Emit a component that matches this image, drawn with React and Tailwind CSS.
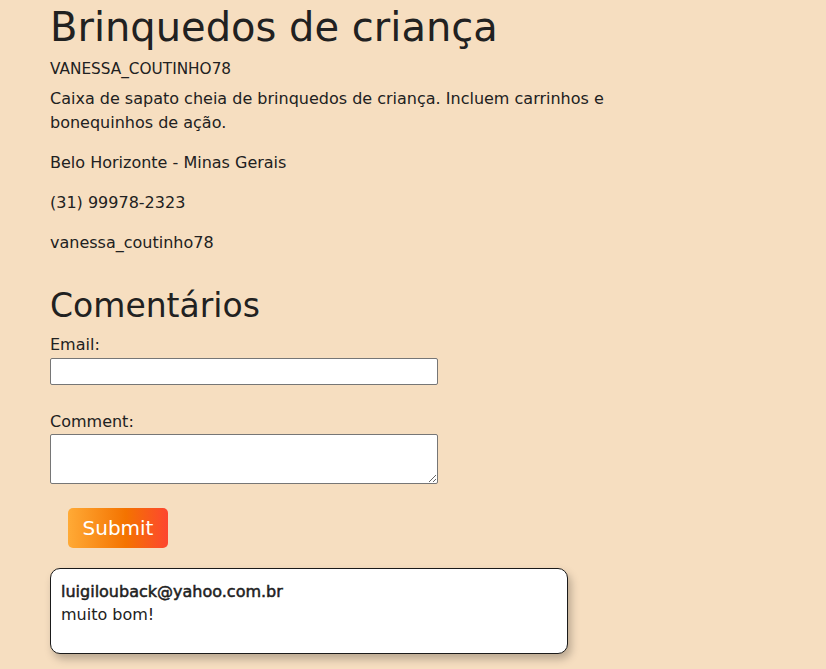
export default function App() {
  return (
    <div className="min-h-[669px] w-full bg-[#f6dec0] text-[#212121] font-['DejaVu_Sans',sans-serif] pl-[50px] pb-[20px] overflow-hidden">
      <h1 className="pt-[3px] text-[40px] leading-[48px] font-normal whitespace-nowrap">Brinquedos de criança</h1>
      <p className="mt-[6px] text-[15.3px] leading-[24px]">VANESSA_COUTINHO78</p>
      <p className="mt-[6px] text-[16px] leading-[24px] w-[600px]">
        Caixa de sapato cheia de brinquedos de criança. Incluem carrinhos e<br />bonequinhos de ação.
      </p>
      <p className="mt-[16px] text-[16px] leading-[24px]">Belo Horizonte - Minas Gerais</p>
      <p className="mt-[16px] text-[16px] leading-[24px]">(31) 99978-2323</p>
      <p className="mt-[16px] text-[16px] leading-[24px]">vanessa_coutinho78</p>
      <h2 className="mt-[31px] text-[33px] leading-[40px] font-normal">Comentários</h2>
      <form className="flex flex-col items-start" onSubmit={(e) => e.preventDefault()}>
        <label className="mt-[7px] text-[16px] leading-[24px]">Email:</label>
        <input type="email" className="mt-[1px] h-[27px] w-[388px] bg-white border border-[#767676] rounded-[2px]" />
        <label className="mt-[25px] text-[16px] leading-[24px]">Comment:</label>
        <textarea className="mt-0 h-[50px] w-[388px] bg-white border border-[#767676] rounded-[2px] block" />
        <button type="submit" className="mt-[24px] ml-[18px] h-[40px] w-[100px] rounded-[5px] bg-[linear-gradient(90deg,#ffaa36_0%,#f47300_58%,#fd4630_100%)] text-white text-[20px] leading-[40px]">
          Submit
        </button>
      </form>
      <div className="mt-[20px] w-[518px] h-[86px] bg-white border border-[#1a1a1a] rounded-[10px] px-[10px] pt-[11px] pb-[10px] shadow-[3px_5px_8px_rgba(0,0,0,0.25)]">
        <p className="text-[16px] leading-[24px] font-normal [-webkit-text-stroke:0.5px_#212121]">luigilouback@yahoo.com.br</p>
        <p className="text-[16px] leading-[22px]">muito bom!</p>
      </div>
    </div>
  );
}
